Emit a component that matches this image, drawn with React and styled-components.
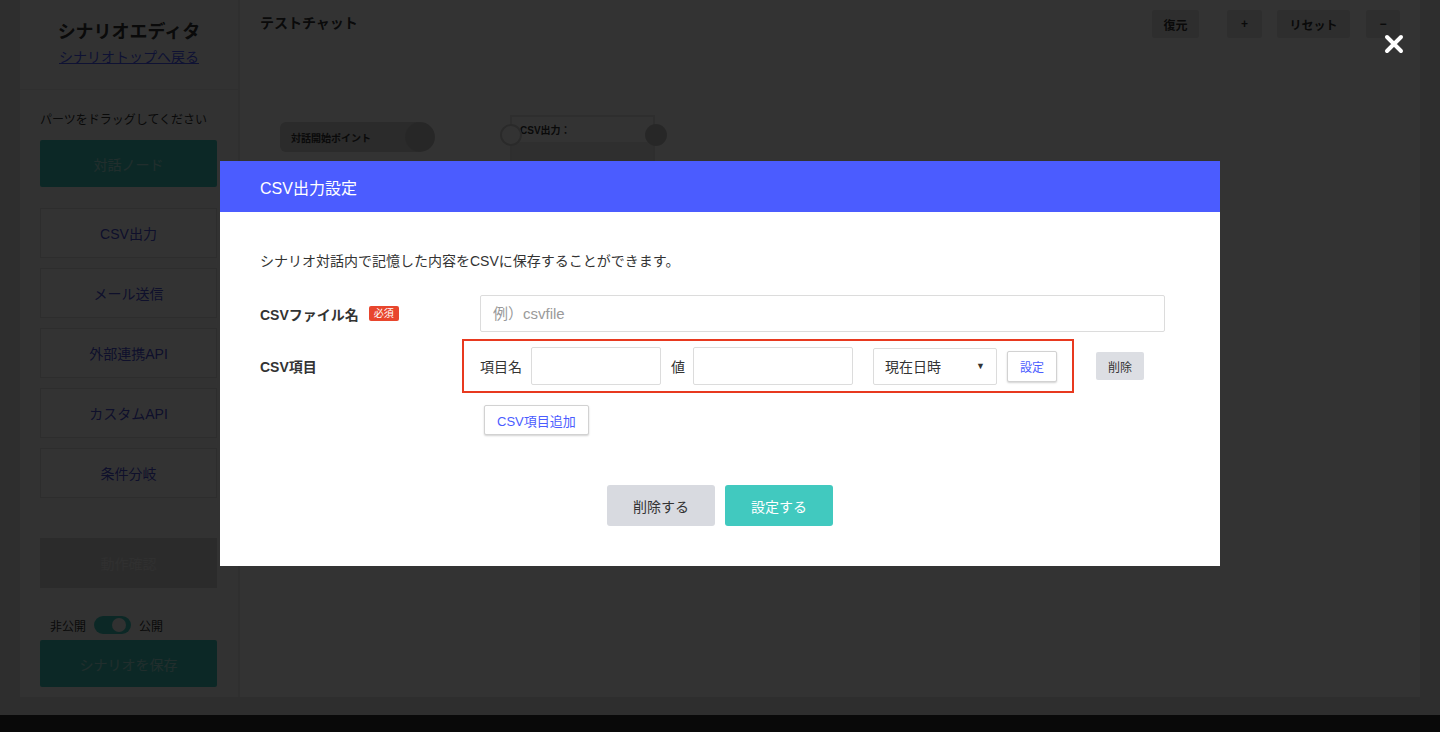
import React from 'react';
import styled, { createGlobalStyle } from 'styled-components';

const GlobalStyle = createGlobalStyle`
  html, body {
    margin: 0;
    padding: 0;
  }
  body {
    font-family: "Helvetica Neue", "Liberation Sans", "Noto Sans CJK JP", sans-serif;
    color: #333;
  }
  * {
    box-sizing: border-box;
  }
`;

const Page = styled.div`
  height: 732px;
  background: #e3e3e3;
  display: flex;
  flex-direction: column;
  overflow: hidden;
`;

const Frame = styled.div`
  display: flex;
  height: 697px;
  padding: 0 20px;
`;

const FooterBar = styled.div`
  margin-top: 18px;
  height: 17px;
  background: #303030;
`;

/* sidebar */
const Sidebar = styled.aside`
  width: 220px;
  background: #fbfbfb;
  border-right: 2px solid #ebebeb;
  display: flex;
  flex-direction: column;
`;

const SideHead = styled.div`
  height: 90px;
  padding-top: 20px;
  text-align: center;
  border-bottom: 1px solid #e8e8e8;
`;

const SideTitle = styled.div`
  font-size: 18px;
  font-weight: bold;
  line-height: 24px;
`;

const BackLink = styled.a`
  display: inline-block;
  margin-top: 3px;
  font-size: 14px;
  line-height: 20px;
  color: #4b5cff;
  text-decoration: underline;
`;

const SideBody = styled.div`
  padding: 22px 21px 0 20px;
  display: flex;
  flex-direction: column;
`;

const Hint = styled.div`
  font-size: 12px;
  line-height: 16px;
`;

const TealButton = styled.div`
  height: 47px;
  margin-top: ${p => p.$mt || 0}px;
  background: #3ec8bd;
  color: rgba(255, 255, 255, 0.55);
  font-size: 14px;
  border-radius: 2px;
  display: flex;
  align-items: center;
  justify-content: center;
`;

const PartList = styled.div`
  margin-top: 21px;
  display: flex;
  flex-direction: column;
  gap: 10px;
`;

const PartButton = styled.div`
  height: 50px;
  border: 1px solid #dedede;
  background: #fff;
  color: #4b4fd8;
  font-size: 14px;
  display: flex;
  align-items: center;
  justify-content: center;
`;

const GrayButton = styled.div`
  height: 50px;
  margin-top: 40px;
  background: #d6d6d6;
  color: rgba(255, 255, 255, 0.6);
  font-size: 14px;
  display: flex;
  align-items: center;
  justify-content: center;
`;

const ToggleRow = styled.div`
  margin-top: 26px;
  height: 22px;
  padding-left: 10px;
  display: flex;
  align-items: center;
  gap: 8px;
  font-size: 12px;
`;

const Track = styled.div`
  width: 37px;
  height: 18px;
  border-radius: 9px;
  background: #3ec8bd;
  position: relative;
`;

const Knob = styled.div`
  position: absolute;
  top: 2px;
  right: 5px;
  width: 14px;
  height: 14px;
  border-radius: 50%;
  background: #f2f2f2;
`;

/* canvas */
const Canvas = styled.main`
  flex: 1;
  background: #fff;
  position: relative;
`;

const CanvasHead = styled.div`
  display: flex;
  justify-content: space-between;
  align-items: flex-start;
  padding: 10px 20px 0;
`;

const ChatTitle = styled.div`
  font-size: 14px;
  font-weight: bold;
  line-height: 26px;
`;

const Tools = styled.div`
  display: flex;
`;

const ToolButton = styled.div`
  width: ${p => p.$w}px;
  height: 28px;
  margin-left: ${p => p.$ml || 0}px;
  background: #e7e7e7;
  border-radius: 2px;
  font-size: 12px;
  font-weight: bold;
  display: flex;
  align-items: center;
  justify-content: center;
`;

const StartNode = styled.div`
  position: absolute;
  left: 40px;
  top: 122px;
  width: 140px;
  height: 30px;
  padding-left: 11px;
  background: #d4d4d4;
  border-radius: 6px 0 0 6px;
  font-size: 10px;
  font-weight: bold;
  display: flex;
  align-items: center;
`;

const Port = styled.div`
  position: absolute;
  top: ${p => p.$top}px;
  left: ${p => p.$left}px;
  width: ${p => p.$size || 22}px;
  height: ${p => p.$size || 22}px;
  border-radius: 50%;
  background: ${p => (p.$hollow ? '#fff' : '#c4c4c4')};
  border: ${p => (p.$hollow ? '2px solid #d0d0d0' : 'none')};
`;

const CsvNode = styled.div`
  position: absolute;
  left: 270px;
  top: 115px;
  width: 145px;
  height: 60px;
  border: 2px solid #e4e4e4;
  background: #fff;
`;

const CsvNodeHead = styled.div`
  height: 25px;
  padding-left: 8px;
  font-size: 10px;
  font-weight: bold;
  display: flex;
  align-items: center;
`;

const CsvNodeBody = styled.div`
  height: 30px;
  background: #ececec;
`;

/* modal */
const Overlay = styled.div`
  position: fixed;
  inset: 0;
  background: rgba(0, 0, 0, 0.8);
  display: flex;
  justify-content: center;
  align-items: flex-start;
  padding-top: 161px;
`;

const CloseButton = styled.div`
  position: absolute;
  left: 1384px;
  top: 34px;
  width: 20px;
  height: 20px;
`;

const Modal = styled.div`
  width: 1000px;
  background: #fff;
`;

const ModalHead = styled.div`
  height: 51px;
  padding: 0 40px;
  background: #4b5cff;
  color: #fff;
  font-size: 16px;
  display: flex;
  align-items: center;
`;

const ModalBody = styled.div`
  padding: 39px 55px 40px 40px;
`;

const Desc = styled.p`
  margin: 0;
  font-size: 14px;
  line-height: 20px;
`;

const FieldRow = styled.div`
  display: flex;
  align-items: center;
  margin-top: ${p => p.$mt}px;
`;

const FieldLabel = styled.div`
  width: 220px;
  flex-shrink: 0;
  font-size: 14px;
  font-weight: bold;
  display: flex;
  align-items: center;
  gap: 10px;
`;

const Required = styled.span`
  background: #e8462d;
  color: #fff;
  font-size: 10px;
  font-weight: normal;
  padding: 1px 5px;
  border-radius: 2px;
  line-height: 13px;
`;

const TextInput = styled.input`
  width: ${p => (p.$w ? `${p.$w}px` : '100%')};
  height: ${p => p.$h || 38}px;
  flex: ${p => (p.$w ? 'none' : 1)};
  border: 1px solid #dcdcdc;
  border-radius: 2px;
  padding: 0 12px;
  font-family: inherit;
  font-size: 15px;
  color: #333;
  outline: none;
  &::placeholder {
    color: #9a9a9a;
  }
`;

const Highlight = styled.div`
  margin-left: -18px;
  height: 54px;
  padding: 0 15px 0 16px;
  border: 2px solid #e8391f;
  display: flex;
  align-items: center;
`;

const InlineLabel = styled.span`
  font-size: 14px;
  margin: 0 ${p => p.$mr}px 0 ${p => p.$ml || 0}px;
`;

const FakeSelect = styled.div`
  width: 124px;
  height: 37px;
  margin-left: 20px;
  padding: 0 11px 0 11px;
  border: 1px solid #dcdcdc;
  border-radius: 2px;
  font-size: 14px;
  display: flex;
  align-items: center;
  justify-content: space-between;
  span:last-child {
    font-size: 9px;
  }
`;

const SmallButton = styled.button`
  height: ${p => p.$h}px;
  padding: 0 ${p => p.$px}px;
  margin-left: ${p => p.$ml || 0}px;
  font-family: inherit;
  font-size: ${p => p.$fs || 12}px;
  color: ${p => (p.$gray ? '#333' : '#4b5cff')};
  background: ${p => (p.$gray ? '#dcdee3' : '#fff')};
  border: ${p => (p.$gray ? 'none' : '1px solid #d2d2d2')};
  box-shadow: ${p => (p.$gray ? 'none' : '0 1px 2px rgba(0,0,0,0.18)')};
  border-radius: 2px;
  cursor: pointer;
`;

const AddWrap = styled.div`
  margin: 12px 0 0 224px;
`;

const Actions = styled.div`
  margin-top: 50px;
  margin-left: 15px;
  display: flex;
  justify-content: center;
  gap: 10px;
`;

const ActionButton = styled.button`
  width: 108px;
  height: 41px;
  border: none;
  border-radius: 3px;
  font-family: inherit;
  font-size: 14px;
  color: ${p => (p.$primary ? '#fff' : '#333')};
  background: ${p => (p.$primary ? '#41c9bf' : '#d8dae0')};
`;

const parts = ['CSV出力', 'メール送信', '外部連携API', 'カスタムAPI', '条件分岐'];

export default function App() {
  return (
    <>
      <GlobalStyle />
      <Page>
        <Frame>
          <Sidebar>
            <SideHead>
              <SideTitle>シナリオエディタ</SideTitle>
              <BackLink>シナリオトップへ戻る</BackLink>
            </SideHead>
            <SideBody>
              <Hint>パーツをドラッグしてください</Hint>
              <TealButton $mt={12}>対話ノード</TealButton>
              <PartList>
                {parts.map(p => (
                  <PartButton key={p}>{p}</PartButton>
                ))}
              </PartList>
              <GrayButton>動作確認</GrayButton>
              <ToggleRow>
                <span>非公開</span>
                <Track>
                  <Knob />
                </Track>
                <span>公開</span>
              </ToggleRow>
              <TealButton $mt={4}>シナリオを保存</TealButton>
            </SideBody>
          </Sidebar>
          <Canvas>
            <CanvasHead>
              <ChatTitle>テストチャット</ChatTitle>
              <Tools>
                <ToolButton $w={47}>復元</ToolButton>
                <ToolButton $w={35} $ml={28}>+</ToolButton>
                <ToolButton $w={73} $ml={15}>リセット</ToolButton>
                <ToolButton $w={34} $ml={16}>−</ToolButton>
              </Tools>
            </CanvasHead>
            <StartNode>対話開始ポイント</StartNode>
            <Port $top={122} $left={165} $size={30} />
            <CsvNode>
              <CsvNodeHead>CSV出力：</CsvNodeHead>
              <CsvNodeBody />
            </CsvNode>
            <Port $top={124} $left={260} $hollow />
            <Port $top={124} $left={405} />
          </Canvas>
        </Frame>
        <FooterBar />
      </Page>

      <Overlay>
        <CloseButton>
          <svg width="20" height="20" viewBox="0 0 20 20">
            <path d="M3 3 L17 17 M17 3 L3 17" stroke="#fff" strokeWidth="4" strokeLinecap="round" />
          </svg>
        </CloseButton>
        <Modal>
          <ModalHead>CSV出力設定</ModalHead>
          <ModalBody>
            <Desc>シナリオ対話内で記憶した内容をCSVに保存することができます。</Desc>
            <FieldRow $mt={24}>
              <FieldLabel>
                CSVファイル名
                <Required>必須</Required>
              </FieldLabel>
              <TextInput placeholder="例）csvfile" $h={37} />
            </FieldRow>
            <FieldRow $mt={7}>
              <FieldLabel>CSV項目</FieldLabel>
              <Highlight>
                <InlineLabel $mr={9}>項目名</InlineLabel>
                <TextInput $w={130} />
                <InlineLabel $ml={10} $mr={8}>値</InlineLabel>
                <TextInput $w={160} />
                <FakeSelect>
                  <span>現在日時</span>
                  <span>▼</span>
                </FakeSelect>
                <SmallButton $h={31} $px={12} $ml={10}>設定</SmallButton>
              </Highlight>
              <SmallButton $gray $h={28} $px={12} $ml={22}>削除</SmallButton>
            </FieldRow>
            <AddWrap>
              <SmallButton $h={30} $px={12} $fs={13}>CSV項目追加</SmallButton>
            </AddWrap>
            <Actions>
              <ActionButton>削除する</ActionButton>
              <ActionButton $primary>設定する</ActionButton>
            </Actions>
          </ModalBody>
        </Modal>
      </Overlay>
    </>
  );
}
